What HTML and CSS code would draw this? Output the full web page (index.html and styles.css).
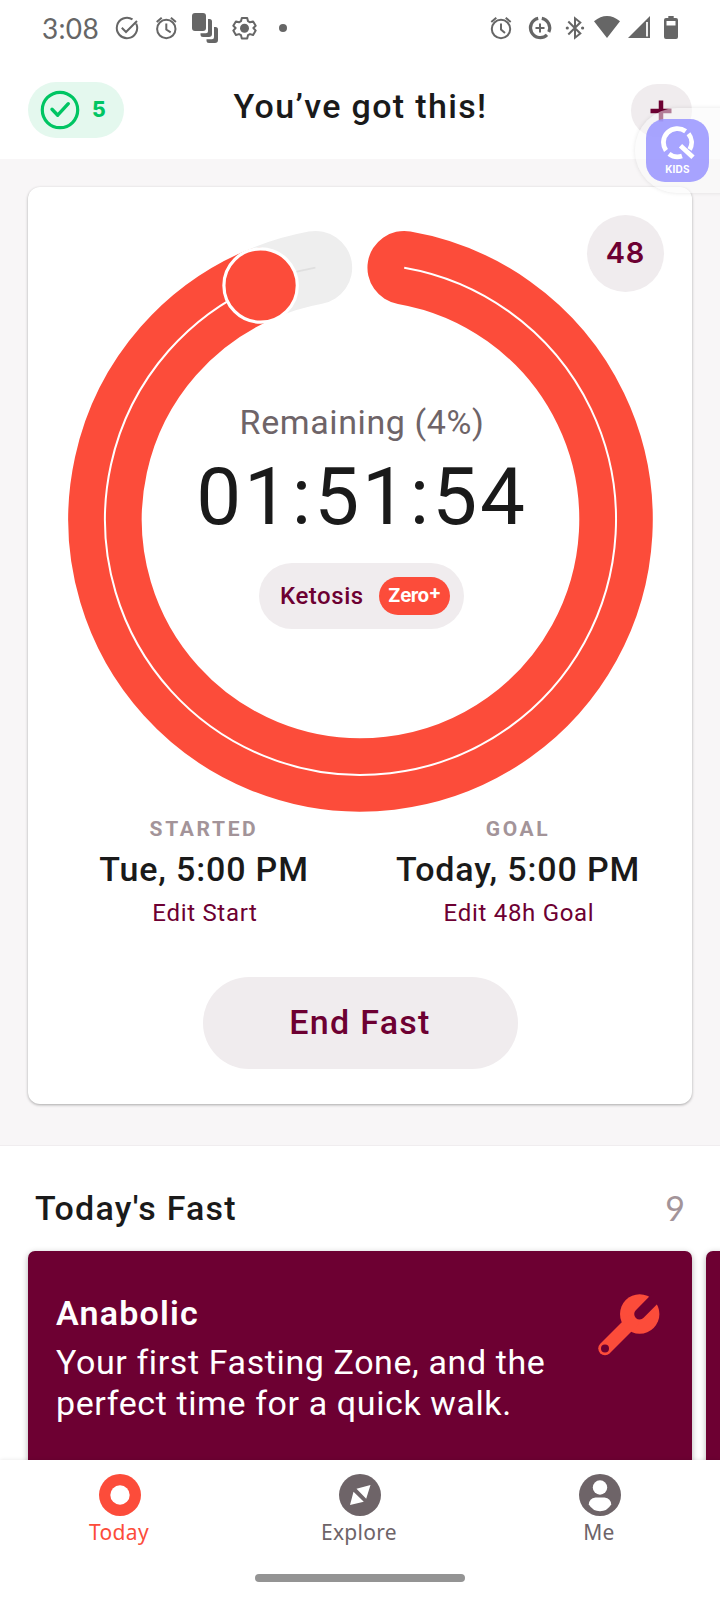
FILE: index.html
```html
<!DOCTYPE html>
<html lang="en">
<head>
<meta charset="utf-8">
<title>Zero</title>
<link rel="stylesheet" href="styles.css">
</head>
<body>
<div class="screen">
  <div class="status">
    <span class="clock">3:08</span>
    <svg class="st-left" width="190" height="34" viewBox="110 10 190 34" fill="none" stroke="#666" stroke-width="2">
      <path d="M136.200 22.600A10.200 10.200 0 1 1 132.500 18.400M121.800 26.800l4.200 4.200L137 20"/>
      <circle cx="166.300" cy="28" r="9.200"/><path d="M166.300 22.500v6l4.400 2.800M156.700 21l5-4.200M175.900 21l-5-4.200"/>
      <g fill="#666" stroke="none"><rect x="192" y="12" width="14" height="18" rx="3"/><path d="M208 18h1.500q2.500 0 2.500 2.500V33q0 3-3 3h-6q-2.500 0-2.500-2.500V32.300H206q2 0 2-2zM214 26h1.500q2.500 0 2.500 2.500V39q0 3-3 3h-6q-2.500 0-2.500-2.500V38.300H212q2 0 2-2z"/></g>
      <path stroke-linejoin="round" d="M241.800 17h5.400l.8 3.200 2 1.100 3.100-.9 2.600 4.400-2.300 2.200 2.300 2.600-2.600 4.400-3.100-.9-2 1.100-.8 3.200h-5.400l-.8-3.200-2-1.100-3.100.9-2.600-4.400 2.300-2.600-2.300-2.200 2.600-4.400 3.100.9 2-1.100z"/>
      <g fill="#666" stroke="none"><circle cx="244.500" cy="27.200" r="4.500"/><circle cx="283" cy="27" r="4"/></g>
    </svg>
    <svg class="st-right" width="194" height="34" viewBox="486 10 194 34" fill="none" stroke="#666" stroke-width="2">
      <circle cx="501" cy="28" r="9.200"/><path d="M501 22.500v6l4 3.500M491.300 21l5-4.200M510.700 21l-5-4.200"/>
      <path stroke-width="3.200" d="M538.200 17.400A9.700 9.700 0 1 0 547 33.800M541.800 17.400A9.700 9.700 0 0 1 548.800 31"/><path d="M540 22.500v9M535.500 27h9"/>
      <path d="M568.300 20.500l12 12-5.300 4.200V17.300l5.300 4.200-12 12"/><circle cx="567.300" cy="27" r="1.600" fill="#666" stroke="none"/><circle cx="582.600" cy="27" r="1.600" fill="#666" stroke="none"/>
      <g fill="#666" stroke="none"><path d="M594 20.300Q607 9.500 620 20.300L607 37zM628 37L650 15v22zM664 19q0-2 2-2h2.300v-2h5.400v2h2.300q2 0 2 2v17q0 2-2 2h-10q-2 0-2-2z"/></g>
      <path stroke="#fff" stroke-width="1.800" d="M647 21v14.500"/><path fill="#fff" stroke="none" d="M666.500 20h9v4.500h-9z"/>
    </svg>
  </div>

  <header class="header">
    <div class="streak">
      <svg width="40" height="40" viewBox="0 0 40 40" fill="none" stroke="#00c563" stroke-width="3.200"><circle cx="20" cy="20" r="17.700"/><path stroke-linecap="round" stroke-linejoin="round" stroke-width="3.400" d="M12 19.300l5.700 5.900L28.300 13.700"/></svg>
      <span class="streak-n">5</span>
    </div>
    <h1 class="title">You’ve got this!</h1>
    <div class="add"><svg width="22" height="22" viewBox="0 0 22 22" stroke="#6d0032" stroke-width="4.500"><path d="M11 .5v21M.5 11h21"/></svg></div>
  </header>
  <div class="bubble">
    <div class="kids">
      <svg width="36" height="36" viewBox="659 126 36 36" fill="none" stroke="#fff" stroke-width="4.800"><path d="M684.600 132.300A13.900 13.900 0 0 0 665 151.500M668 154.800A13.900 13.900 0 0 0 681 157M687.500 134.800A13.900 13.900 0 0 1 688.700 150.500M679.500 146.800L692 158.300"/></svg>
      <span class="kids-t">KIDS</span>
    </div>
  </div>

  <main class="hero">
    <section class="card">
      <div class="dial">
        <svg class="ring" width="664" height="626" viewBox="28.700 187.700 664 626" fill="none">
          <path stroke="#eee" stroke-width="73.500" stroke-linecap="round" d="M260.800 285.200A255.500 255.500 0 0 1 316.100 268.400"/>
          <path stroke="#dfdfdf" stroke-width="1.800" d="M260.800 285.200A255.500 255.500 0 0 1 316.100 268.400"/>
          <path stroke="#fc4c3a" stroke-width="73.500" stroke-linecap="round" d="M404.900 268.400A255.500 255.500 0 1 1 260.800 285.200"/>
          <path stroke="#fff" stroke-width="2" d="M404.900 268.400A255.500 255.500 0 1 1 260.800 285.200"/>
          <circle cx="261.300" cy="286.200" r="36.700" fill="#fc4c3a" stroke="#fff" stroke-width="3.200"/>
        </svg>
        <div class="readout">
          <div class="remaining">Remaining (4%)</div>
          <div class="timer">01:51:54</div>
          <div class="zone"><span class="zone-t">Ketosis</span><span class="plus-pill">Zero<span class="sup">+</span></span></div>
        </div>
        <div class="hours">48</div>
      </div>
      <div class="times">
        <div class="time"><div class="cap">STARTED</div><div class="when">Tue, 5:00 PM</div><div class="edit">Edit Start</div></div>
        <div class="time"><div class="cap">GOAL</div><div class="when">Today, 5:00 PM</div><div class="edit">Edit 48h Goal</div></div>
      </div>
      <div class="end">End Fast</div>
    </section>
  </main>

  <section class="today">
    <div class="today-head"><h2 class="h2">Today's Fast</h2><span class="count">9</span></div>
    <div class="cards">
      <article class="tip">
        <div class="tip-body"><h3 class="tip-h">Anabolic</h3><p class="tip-p">Your first Fasting Zone, and the<br>perfect time for a quick walk.</p></div>
        <svg class="wrench" width="64" height="64" viewBox="597 1293 64 64" fill="none"><circle cx="639.700" cy="1314" r="19.700" fill="#fc4c3a"/><path stroke="#fc4c3a" stroke-width="13.500" stroke-linecap="round" d="M605 1348.500L632 1321.500"/><circle cx="605" cy="1348.500" r="4" fill="#6d0032"/><path stroke="#6d0032" stroke-width="11" stroke-linecap="round" d="M639.700 1314L662 1291.500"/></svg>
      </article>
      <article class="tip"></article>
    </div>
  </section>

  <nav class="nav">
    <div class="tabs">
      <div class="tab on"><svg width="42" height="42" viewBox="0 0 42 42"><circle cx="21" cy="21" r="21" fill="#fc4c3a"/><circle cx="21" cy="21" r="9.700" fill="#fff"/></svg><span class="lab">Today</span></div>
      <div class="tab"><svg width="42" height="42" viewBox="0 0 42 42"><circle cx="21" cy="21" r="21" fill="#6e6468"/><path fill="#fff" d="M31.500 11L17.500 14.700 27.200 24.800zM11 31L14.500 17.800 24.800 27.700z"/></svg><span class="lab">Explore</span></div>
      <div class="tab"><svg width="42" height="42" viewBox="0 0 42 42"><circle cx="21" cy="21" r="21" fill="#6e6468"/><circle cx="21" cy="13.500" r="7.200" fill="#fff"/><path fill="#fff" d="M16.500 23.500h9q6.500 1 6.700 7Q28 37.300 21 37.300T9.800 30.500q.2-6 6.700-7z"/></svg><span class="lab">Me</span></div>
    </div>
    <div class="home"></div>
  </nav>
</div>
</body>
</html>
```
FILE: styles.css
```css
* { box-sizing: border-box; margin: 0; padding: 0; }
body { background: #fff; font-family: Roboto, sans-serif; color: #1a1a1a; }
svg { display: block; flex: none; }
.screen { position: relative; width: 720px; height: 1600px; overflow: hidden; display: flex; flex-direction: column; background: #fff; }

.status { height: 55px; flex: none; display: flex; align-items: center; padding: 0 40px 0 42px; }
.clock { font: 400 28px/34px Lato, sans-serif; color: #666; width: 68px; white-space: nowrap; letter-spacing: .3px; }
.st-right { margin-left: auto; }

.header { height: 104px; flex: none; display: flex; justify-content: space-between; align-items: flex-start; padding: 27px 28px 0; }
.streak { width: 96px; height: 56px; border-radius: 28px; background: #e4f8ee; display: flex; align-items: center; padding-left: 12px; gap: 12px; }
.streak-n { font: 800 21px/26px Inter, sans-serif; color: #00c563; }
.title { font-size: 34px; line-height: 40px; font-weight: 500; letter-spacing: 1.350px; margin: 4px 0 0 -34px; white-space: nowrap; }
.add { width: 61px; height: 53px; margin-top: 2px; border-radius: 27px; background: #f0ecee; display: flex; align-items: center; justify-content: center; }

/* Floating launcher docked to the right edge */
.bubble { position: absolute; left: 635px; top: 108px; width: 140px; height: 85px; border-radius: 42px; background: rgba(250,250,250,.5); box-shadow: 0 0 4px rgba(0,0,0,.1); padding: 11px; }
.kids { width: 63px; height: 63px; border-radius: 19px; background: rgba(154,151,255,.87); display: flex; flex-direction: column; align-items: center; padding-top: 6px; }
.kids-t { font: 700 10px/12px Inter, sans-serif; color: #fff; margin-top: 2px; letter-spacing: .2px; }

.hero { height: 987px; flex: none; background: #f8f6f7; border-bottom: 1px solid #f0edef; padding: 28px; }
.card { height: 917px; background: #fff; border-radius: 12px; box-shadow: 0 1px 3px rgba(0,0,0,.32); }
.dial { position: relative; display: grid; height: 626px; }
.ring, .readout { grid-area: 1 / 1; }
.readout { display: flex; flex-direction: column; align-items: center; padding-top: 215px; }
.remaining { font-size: 34px; line-height: 40px; color: #6e6468; letter-spacing: .6px; padding-left: 4px; }
.timer { font-size: 80px; line-height: 84px; margin-top: 13px; letter-spacing: 2.900px; padding-left: 4px; }
.zone { width: 205px; height: 66px; margin-top: 24px; border-radius: 33px; background: #f0ecee; display: flex; align-items: center; justify-content: space-between; padding: 0 14px 0 21px; margin-left: 3px; }
.zone-t { font-size: 24px; line-height: 28px; font-weight: 500; color: #6d0032; letter-spacing: .55px; }
.plus-pill { width: 71px; height: 38px; border-radius: 19px; background: #fc4c3a; color: #fff; font: 700 19px/38px Inter, sans-serif; text-align: center; letter-spacing: -.6px; }
.sup { position: relative; top: -3px; }
.hours { position: absolute; right: 28px; top: 28px; width: 77px; height: 77px; border-radius: 50%; background: #f0ecee; color: #6d0032; font: 600 29px/75px Inter, sans-serif; letter-spacing: .8px; text-align: center; }

.times { display: grid; grid-template-columns: 314px 314px; padding: 3px 17px 0 19px; text-align: center; }
.cap { font-size: 21px; line-height: 26px; font-weight: 700; letter-spacing: 2.650px; color: #a39499; }
.when { font-size: 34px; line-height: 40px; font-weight: 500; margin-top: 7px; letter-spacing: .85px; }
.edit { font-size: 24px; line-height: 28px; margin-top: 10px; color: #6d0032; letter-spacing: .7px; padding-left: 2px; }
.end { width: 315px; height: 92px; margin: 50px auto 0; border-radius: 46px; background: #f0ecee; color: #6d0032; font-size: 34px; line-height: 91px; font-weight: 500; text-align: center; letter-spacing: 1.300px; }

.today { height: 314px; flex: none; overflow: hidden; padding: 42px 0 0 28px; }
.today-head { display: flex; justify-content: space-between; padding: 0 35px 0 7px; height: 63px; }
.h2 { font-size: 34px; line-height: 40px; font-weight: 500; letter-spacing: 1.200px; }
.count { font: 400 34px/39px Lato, sans-serif; color: #a39499; }
.cards { display: flex; gap: 14px; }
.tip { width: 664px; height: 260px; flex: none; border-radius: 7px; background: #6d0032; color: #fff; box-shadow: 0 2px 6px rgba(0,0,0,.3); display: flex; justify-content: space-between; padding: 42px 31px 0 28px; }
.tip-h { font-size: 34px; line-height: 40px; font-weight: 600; letter-spacing: 1.200px; }
.tip-p { font-size: 34px; line-height: 41px; margin-top: 9px; white-space: nowrap; letter-spacing: .6px; }

.nav { position: relative; height: 140px; flex: none; background: #fff; box-shadow: 0 0 4px rgba(0,0,0,.1); padding-top: 14px; }
.tabs { display: grid; grid-template-columns: repeat(3, 1fr); }
.tab { display: flex; flex-direction: column; align-items: center; color: #6e6468; }
.on { color: #fc4c3a; }
.lab { font: 400 21px/26px "Noto Sans", sans-serif; margin-top: 3px; padding-right: 2px; letter-spacing: .3px; }
.home { width: 210px; height: 8px; border-radius: 4px; background: #949494; margin: 29px auto 0; }
```
